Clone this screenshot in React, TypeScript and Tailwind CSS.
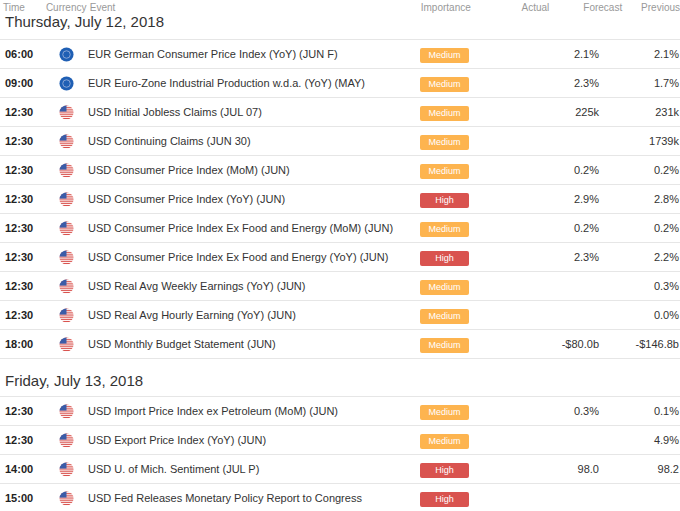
import React from "react";

type Row = [string, "EUR" | "USD", string, "Medium" | "High", string, string];

const day1: Row[] = [
  ["06:00", "EUR", "EUR German Consumer Price Index (YoY) (JUN F)", "Medium", "2.1%", "2.1%"],
  ["09:00", "EUR", "EUR Euro-Zone Industrial Production w.d.a. (YoY) (MAY)", "Medium", "2.3%", "1.7%"],
  ["12:30", "USD", "USD Initial Jobless Claims (JUL 07)", "Medium", "225k", "231k"],
  ["12:30", "USD", "USD Continuing Claims (JUN 30)", "Medium", "", "1739k"],
  ["12:30", "USD", "USD Consumer Price Index (MoM) (JUN)", "Medium", "0.2%", "0.2%"],
  ["12:30", "USD", "USD Consumer Price Index (YoY) (JUN)", "High", "2.9%", "2.8%"],
  ["12:30", "USD", "USD Consumer Price Index Ex Food and Energy (MoM) (JUN)", "Medium", "0.2%", "0.2%"],
  ["12:30", "USD", "USD Consumer Price Index Ex Food and Energy (YoY) (JUN)", "High", "2.3%", "2.2%"],
  ["12:30", "USD", "USD Real Avg Weekly Earnings (YoY) (JUN)", "Medium", "", "0.3%"],
  ["12:30", "USD", "USD Real Avg Hourly Earning (YoY) (JUN)", "Medium", "", "0.0%"],
  ["18:00", "USD", "USD Monthly Budget Statement (JUN)", "Medium", "-$80.0b", "-$146.8b"],
];
const day2: Row[] = [
  ["12:30", "USD", "USD Import Price Index ex Petroleum (MoM) (JUN)", "Medium", "0.3%", "0.1%"],
  ["12:30", "USD", "USD Export Price Index (YoY) (JUN)", "Medium", "", "4.9%"],
  ["14:00", "USD", "USD U. of Mich. Sentiment (JUL P)", "High", "98.0", "98.2"],
  ["15:00", "USD", "USD Fed Releases Monetary Policy Report to Congress", "High", "", ""],
];

function Flag({ c }: { c: "EUR" | "USD" }) {
  if (c === "EUR")
    return (
      <svg width="15" height="15" viewBox="0 0 16 16">
        <circle cx="8" cy="8" r="7.5" fill="#1f5fb4" />
        <circle cx="8" cy="8" r="4" fill="none" stroke="#8fa9d6" strokeWidth="1" />
      </svg>
    );
  return (
    <svg width="15" height="15" viewBox="0 0 16 16">
      <defs>
        <clipPath id="cp"><circle cx="8" cy="8" r="7.5" /></clipPath>
      </defs>
      <g clipPath="url(#cp)">
        <rect width="16" height="16" fill="#fff" />
        {[0, 2.3, 4.6, 6.9, 9.2, 11.5, 13.8].map((y) => (
          <rect key={y} x="0" y={y} width="16" height="1.2" fill="#d9534f" />
        ))}
        <rect width="8" height="7" fill="#3b5ca8" />
      </g>
    </svg>
  );
}

function R({ r }: { r: Row }) {
  return (
    <div className="flex items-center h-[29px] border-b border-[#e6e6e6] text-[11px] text-[#333]">
      <div className="w-[58px] pl-[5px] font-bold text-[#222]">{r[0]}</div>
      <div className="w-[30px] flex justify-start pl-[1px]"><Flag c={r[1]} /></div>
      <div className="w-[332px]">{r[2]}</div>
      <div className="w-[100px]">
        <span className={`inline-block w-[49px] h-[15px] leading-[15px] text-center text-[9px] text-white rounded-[2px] ${r[3] === "High" ? "bg-[#d9534f]" : "bg-[#fdb44f]"}`}>{r[3]}</span>
      </div>
      <div className="w-[79px] text-right">{r[4]}</div>
      <div className="w-[81px] text-right pr-[1px]">{r[5]}</div>
    </div>
  );
}

export default function App() {
  return (
    <div className="w-[680px] h-[511px] bg-white overflow-hidden" style={{ fontFamily: "Arial, 'Liberation Sans', sans-serif" }}>
      <div className="flex h-[15px] items-center text-[10px] text-[#999] whitespace-nowrap">
        <div className="w-[46px] pl-[3px]">Time</div>
        <div className="w-[44px]">Currency</div>
        <div className="w-[332px]">Event</div>
        <div className="w-[101px]">Importance</div>
        <div className="w-[62px]">Actual</div>
        <div className="w-[58px]">Forecast</div>
        <div>Previous</div>
      </div>
      <div className="h-[25px] pl-[5px] text-[15px] text-[#333] leading-[14px] border-b border-[#e6e6e6]">Thursday, July 12, 2018</div>
      {day1.map((r, i) => <R key={i} r={r} />)}
      <div className="h-[38px] pl-[5px] pt-[11px] text-[15px] text-[#333] border-b border-[#e6e6e6]">Friday, July 13, 2018</div>
      {day2.map((r, i) => <R key={i} r={r} />)}
    </div>
  );
}
